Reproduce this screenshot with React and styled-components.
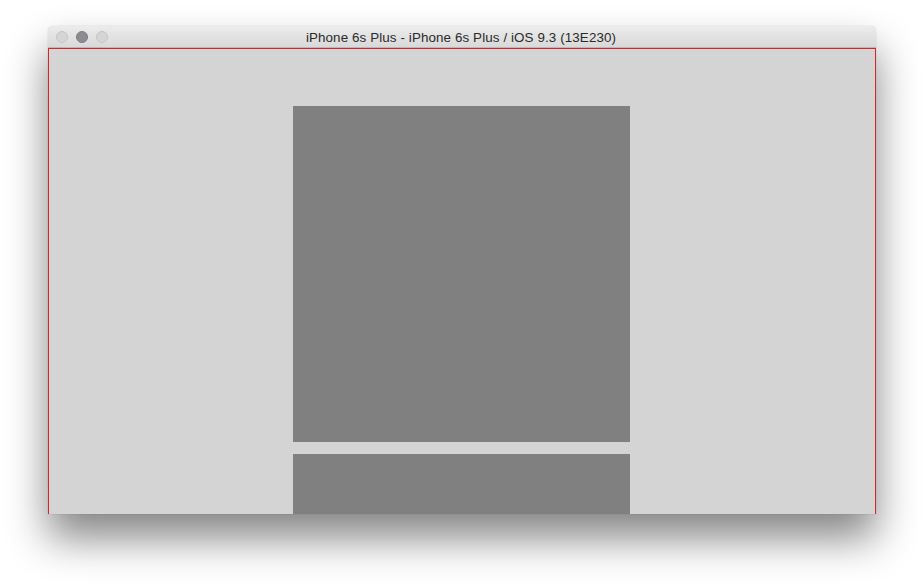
import React from "react";
import styled, { createGlobalStyle } from "styled-components";

const GlobalStyle = createGlobalStyle`
  html, body {
    margin: 0;
    padding: 0;
    background: #ffffff;
  }
  body {
    font-family: "Liberation Sans", Arial, sans-serif;
  }
`;

const Page = styled.div`
  width: 924px;
  height: 588px;
  padding: 26px 0 0 48px;
  box-sizing: border-box;
  overflow: hidden;
`;

const Window = styled.div`
  width: 828px;
  height: 488px;
  display: flex;
  flex-direction: column;
  border-radius: 5px 5px 0 0;
  box-shadow: 0 24px 42px rgba(0, 0, 0, 0.48), 0 0 1px rgba(0, 0, 0, 0.35);
  overflow: hidden;
`;

const TitleBar = styled.div`
  position: relative;
  height: 22px;
  flex: none;
  display: flex;
  align-items: center;
  justify-content: center;
  padding-top: 2px;
  background: linear-gradient(#ececec, #d9d9d9);
  border-bottom: 1px solid #b9b9b9;
  box-sizing: border-box;
`;

const Lights = styled.div`
  position: absolute;
  left: 8px;
  top: 5px;
  display: flex;
  gap: 8px;
`;

const Light = styled.span`
  width: 12px;
  height: 12px;
  border-radius: 50%;
  box-sizing: border-box;
  background: ${(p) => (p.active ? "#8d8d91" : "#d5d5d5")};
  border: 1px solid ${(p) => (p.active ? "#7d7d81" : "#c4c4c4")};
`;

const Title = styled.div`
  font-size: 13.4px;
  color: #2a2a2a;
  letter-spacing: 0.1px;
  margin-left: -2px;
`;

const Screen = styled.div`
  flex: 1;
  display: flex;
  flex-direction: column;
  align-items: center;
  gap: 12px;
  padding-top: 57px;
  background: #d4d4d4;
  border: 1px solid #d5262c;
  border-bottom: none;
  overflow: hidden;
`;

const Block = styled.div`
  flex: none;
  width: 337px;
  height: 336px;
  margin-left: -1px;
  background: #808080;
`;

export default function App() {
  return (
    <>
      <GlobalStyle />
      <Page>
        <Window>
          <TitleBar>
            <Lights>
              <Light />
              <Light active />
              <Light />
            </Lights>
            <Title>iPhone 6s Plus - iPhone 6s Plus / iOS 9.3 (13E230)</Title>
          </TitleBar>
          <Screen>
            <Block />
            <Block />
          </Screen>
        </Window>
      </Page>
    </>
  );
}
